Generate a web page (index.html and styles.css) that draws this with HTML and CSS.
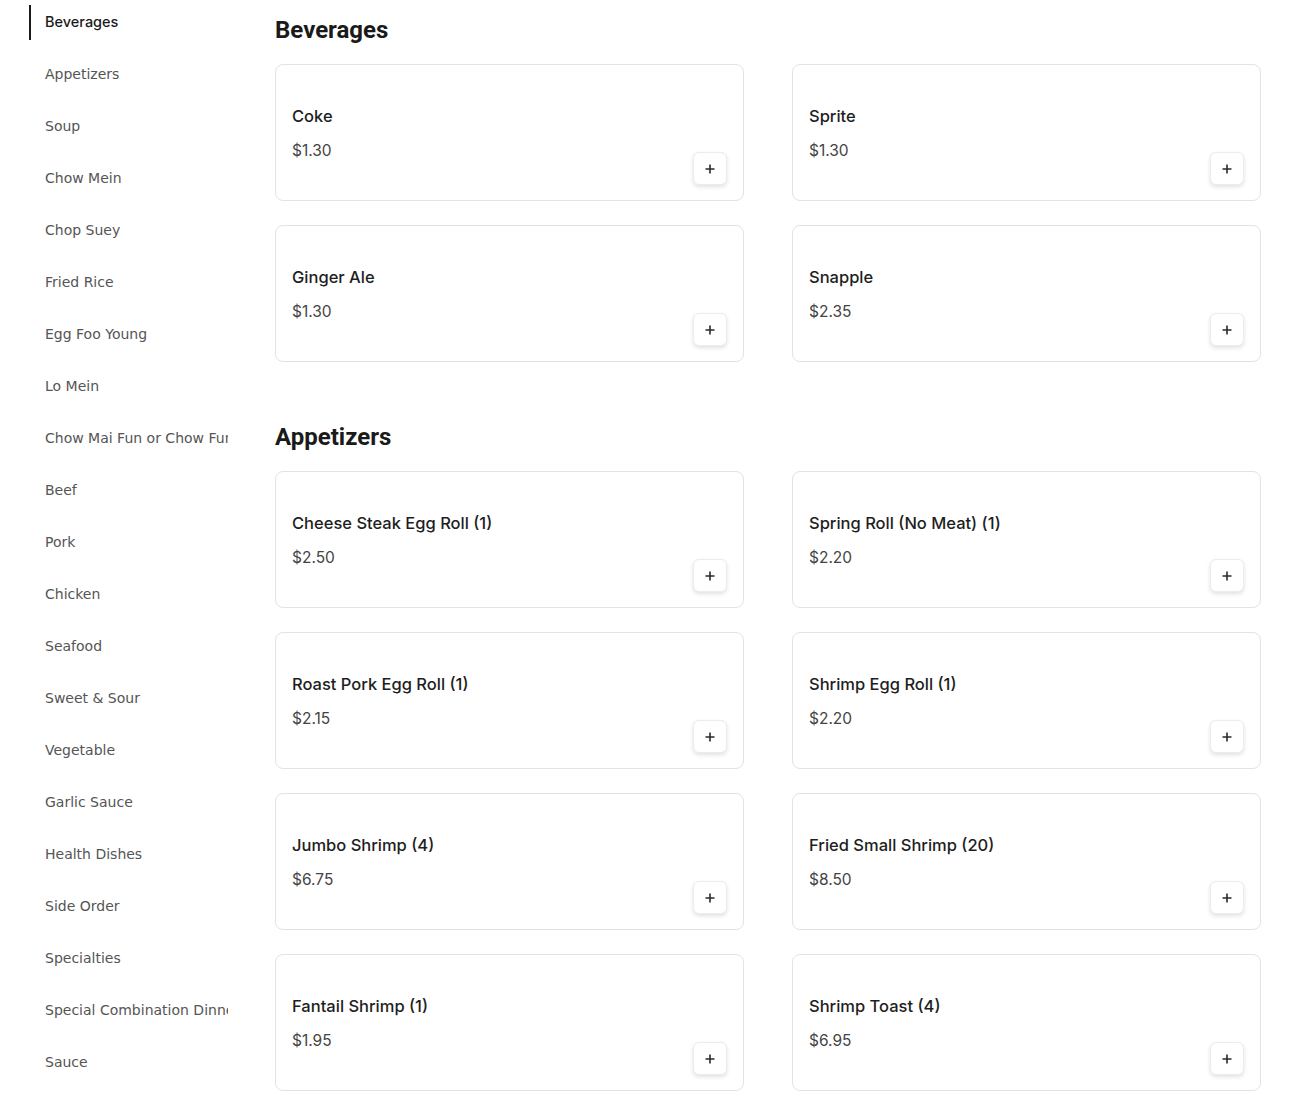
FILE: index.html
```html
<!DOCTYPE html>
<html>
<head>
<meta charset="utf-8">
<link rel="stylesheet" href="styles.css">
</head>
<body>
<div class="page">
  <nav class="sidebar">
    <a class="nav-item active">Beverages</a>
    <a class="nav-item">Appetizers</a>
    <a class="nav-item">Soup</a>
    <a class="nav-item">Chow Mein</a>
    <a class="nav-item">Chop Suey</a>
    <a class="nav-item">Fried Rice</a>
    <a class="nav-item">Egg Foo Young</a>
    <a class="nav-item">Lo Mein</a>
    <a class="nav-item">Chow Mai Fun or Chow Fun</a>
    <a class="nav-item">Beef</a>
    <a class="nav-item">Pork</a>
    <a class="nav-item">Chicken</a>
    <a class="nav-item">Seafood</a>
    <a class="nav-item">Sweet &amp; Sour</a>
    <a class="nav-item">Vegetable</a>
    <a class="nav-item">Garlic Sauce</a>
    <a class="nav-item">Health Dishes</a>
    <a class="nav-item">Side Order</a>
    <a class="nav-item">Specialties</a>
    <a class="nav-item">Special Combination Dinner</a>
    <a class="nav-item">Sauce</a>
  </nav>
  <main class="menu">
    <section class="section">
      <h2 class="section-title">Beverages</h2>
      <div class="grid">
        <div class="card"><div class="info"><div class="name">Coke</div><div class="price">$1.30</div></div><button class="add"><svg viewBox="0 0 12 12" width="12" height="12"><path d="M6 1.5v9M1.5 6h9" stroke="#2a2a2a" stroke-width="1.6" fill="none"/></svg></button></div>
        <div class="card"><div class="info"><div class="name">Sprite</div><div class="price">$1.30</div></div><button class="add"><svg viewBox="0 0 12 12" width="12" height="12"><path d="M6 1.5v9M1.5 6h9" stroke="#2a2a2a" stroke-width="1.6" fill="none"/></svg></button></div>
        <div class="card"><div class="info"><div class="name">Ginger Ale</div><div class="price">$1.30</div></div><button class="add"><svg viewBox="0 0 12 12" width="12" height="12"><path d="M6 1.5v9M1.5 6h9" stroke="#2a2a2a" stroke-width="1.6" fill="none"/></svg></button></div>
        <div class="card"><div class="info"><div class="name">Snapple</div><div class="price">$2.35</div></div><button class="add"><svg viewBox="0 0 12 12" width="12" height="12"><path d="M6 1.5v9M1.5 6h9" stroke="#2a2a2a" stroke-width="1.6" fill="none"/></svg></button></div>
      </div>
    </section>
    <section class="section">
      <h2 class="section-title">Appetizers</h2>
      <div class="grid">
        <div class="card"><div class="info"><div class="name">Cheese Steak Egg Roll (1)</div><div class="price">$2.50</div></div><button class="add"><svg viewBox="0 0 12 12" width="12" height="12"><path d="M6 1.5v9M1.5 6h9" stroke="#2a2a2a" stroke-width="1.6" fill="none"/></svg></button></div>
        <div class="card"><div class="info"><div class="name">Spring Roll (No Meat) (1)</div><div class="price">$2.20</div></div><button class="add"><svg viewBox="0 0 12 12" width="12" height="12"><path d="M6 1.5v9M1.5 6h9" stroke="#2a2a2a" stroke-width="1.6" fill="none"/></svg></button></div>
        <div class="card"><div class="info"><div class="name">Roast Pork Egg Roll (1)</div><div class="price">$2.15</div></div><button class="add"><svg viewBox="0 0 12 12" width="12" height="12"><path d="M6 1.5v9M1.5 6h9" stroke="#2a2a2a" stroke-width="1.6" fill="none"/></svg></button></div>
        <div class="card"><div class="info"><div class="name">Shrimp Egg Roll (1)</div><div class="price">$2.20</div></div><button class="add"><svg viewBox="0 0 12 12" width="12" height="12"><path d="M6 1.5v9M1.5 6h9" stroke="#2a2a2a" stroke-width="1.6" fill="none"/></svg></button></div>
        <div class="card"><div class="info"><div class="name">Jumbo Shrimp (4)</div><div class="price">$6.75</div></div><button class="add"><svg viewBox="0 0 12 12" width="12" height="12"><path d="M6 1.5v9M1.5 6h9" stroke="#2a2a2a" stroke-width="1.6" fill="none"/></svg></button></div>
        <div class="card"><div class="info"><div class="name">Fried Small Shrimp (20)</div><div class="price">$8.50</div></div><button class="add"><svg viewBox="0 0 12 12" width="12" height="12"><path d="M6 1.5v9M1.5 6h9" stroke="#2a2a2a" stroke-width="1.6" fill="none"/></svg></button></div>
        <div class="card"><div class="info"><div class="name">Fantail Shrimp (1)</div><div class="price">$1.95</div></div><button class="add"><svg viewBox="0 0 12 12" width="12" height="12"><path d="M6 1.5v9M1.5 6h9" stroke="#2a2a2a" stroke-width="1.6" fill="none"/></svg></button></div>
        <div class="card"><div class="info"><div class="name">Shrimp Toast (4)</div><div class="price">$6.95</div></div><button class="add"><svg viewBox="0 0 12 12" width="12" height="12"><path d="M6 1.5v9M1.5 6h9" stroke="#2a2a2a" stroke-width="1.6" fill="none"/></svg></button></div>
      </div>
    </section>
  </main>
</div>
</body>
</html>
```

FILE: styles.css
```css
html, body {
  margin: 0;
  padding: 0;
  background: #ffffff;
}
.page {
  display: flex;
  align-items: flex-start;
}
.sidebar {
  flex: 0 0 auto;
  width: 199px;
  margin-left: 29px;
  padding-top: 5px;
  display: flex;
  flex-direction: column;
  gap: 17px;
}
.nav-item {
  display: flex;
  align-items: center;
  box-sizing: border-box;
  height: 35px;
  padding-left: 14px;
  padding-bottom: 2px;
  border-left: 2px solid transparent;
  font-family: "DejaVu Sans", sans-serif;
  font-size: 14px;
  line-height: 18px;
  color: #555555;
  white-space: nowrap;
  overflow: hidden;
  cursor: pointer;
}
.nav-item.active {
  border-left-color: #1a1a1a;
  color: #1a1a1a;
  font-family: Inter, sans-serif;
  font-size: 14.5px;
  font-weight: 500;
  padding-bottom: 1px;
}
.menu {
  flex: 1 1 auto;
  margin-left: 47px;
  margin-right: 29px;
  padding-top: 16px;
  display: flex;
  flex-direction: column;
  gap: 61px;
}
.section-title {
  margin: 0 0 20px 0;
  font-family: Roboto, sans-serif;
  font-weight: 700;
  font-size: 24px;
  line-height: 28px;
  color: #1a1a1a;
}
.grid {
  display: grid;
  grid-template-columns: 1fr 1fr;
  column-gap: 48px;
  row-gap: 24px;
}
.card {
  box-sizing: border-box;
  height: 137px;
  border: 1px solid #e3e3e3;
  border-radius: 8px;
  padding: 39px 16px 15px 16px;
  display: flex;
  justify-content: space-between;
  align-items: flex-start;
}
.info {
  display: flex;
  flex-direction: column;
  gap: 11px;
}
.name {
  font-family: Inter, sans-serif;
  font-weight: 500;
  font-size: 16.5px;
  line-height: 24px;
  color: #1e1e1e;
}
.price {
  font-family: Inter, sans-serif;
  font-size: 15.5px;
  line-height: 24px;
  color: #444444;
}
.add {
  align-self: flex-end;
  width: 34px;
  height: 33px;
  padding: 0;
  border: 1px solid #ececec;
  border-radius: 6px;
  background: #ffffff;
  box-shadow: 0 2px 4px rgba(0, 0, 0, 0.12);
  display: flex;
  align-items: center;
  justify-content: center;
  cursor: pointer;
}
```
